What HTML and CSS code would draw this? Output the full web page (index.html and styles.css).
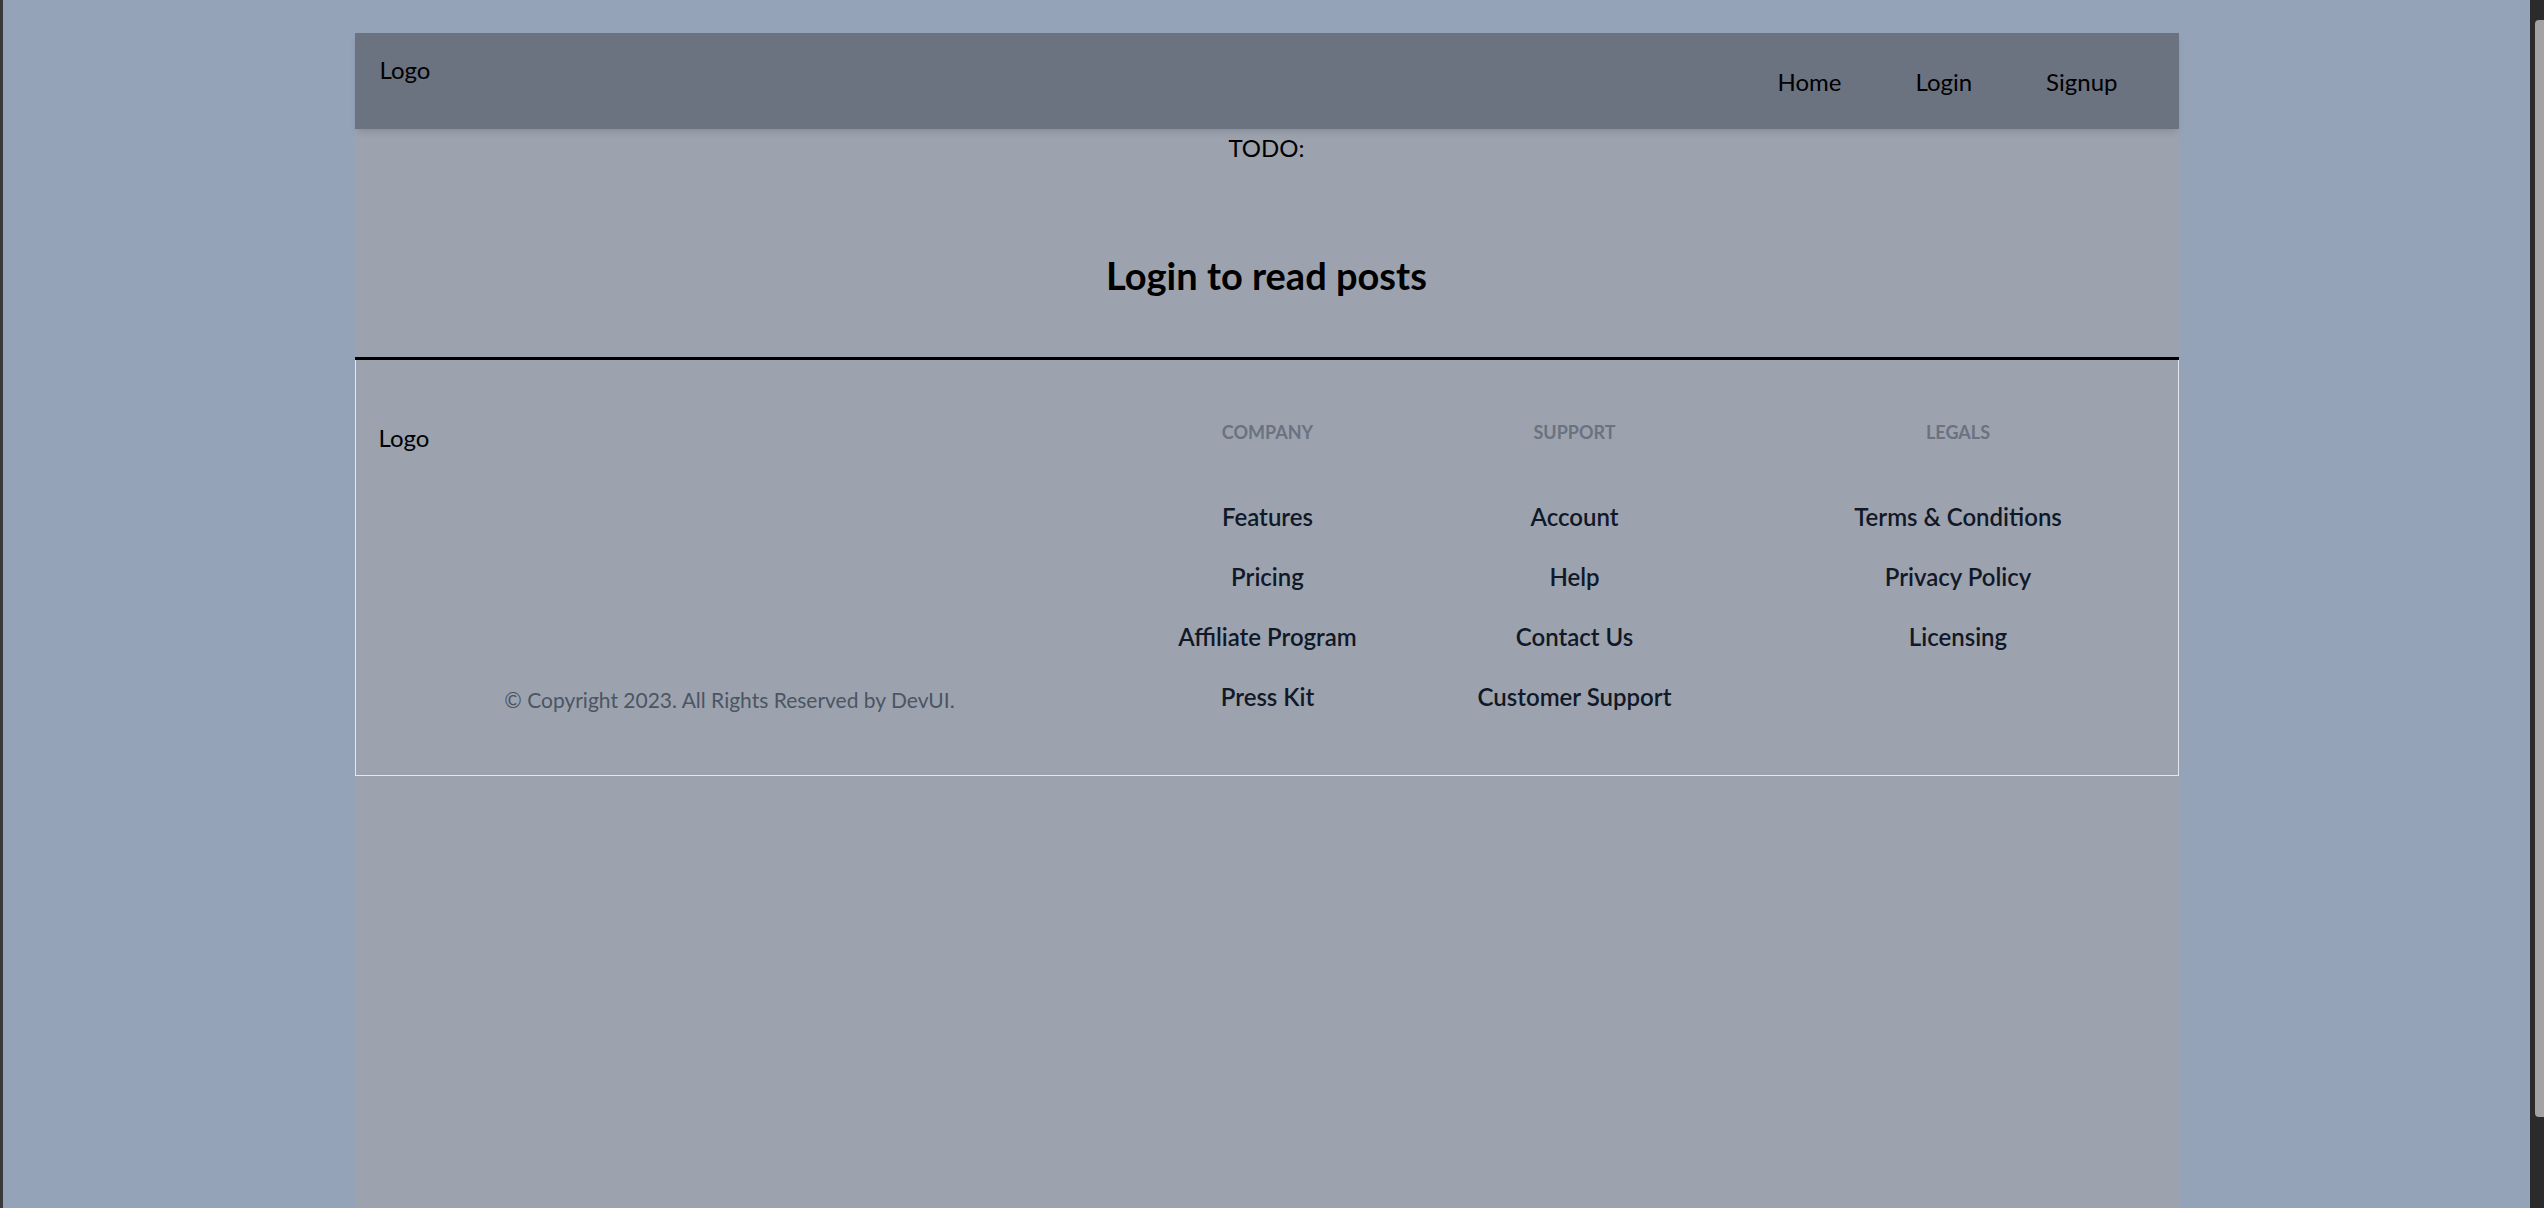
FILE: index.html
```html
<!DOCTYPE html>
<html lang="en">
<head>
<meta charset="utf-8">
<title>Posts</title>
<link rel="stylesheet" href="styles.css">
</head>
<body>
<div class="frame-edge"></div>
<div class="viewport">
  <div class="page">
    <header class="topbar">
      <div class="brand">Logo</div>
      <nav class="nav">
        <a class="nav-link" href="#">Home</a>
        <a class="nav-link" href="#">Login</a>
        <a class="nav-link" href="#">Signup</a>
      </nav>
    </header>
    <main class="content">
      <div class="todo">TODO:</div>
      <h2 class="notice">Login to read posts</h2>
    </main>
    <footer class="footer">
      <div class="footer-brand">
        <div class="footer-logo">Logo</div>
        <p class="copyright">© Copyright 2023. All Rights Reserved by DevUI.</p>
      </div>
      <div class="footer-col">
        <h3 class="col-title">Company</h3>
        <a class="col-link" href="#">Features</a>
        <a class="col-link" href="#">Pricing</a>
        <a class="col-link" href="#">Affiliate Program</a>
        <a class="col-link" href="#">Press Kit</a>
      </div>
      <div class="footer-col">
        <h3 class="col-title">Support</h3>
        <a class="col-link" href="#">Account</a>
        <a class="col-link" href="#">Help</a>
        <a class="col-link" href="#">Contact Us</a>
        <a class="col-link" href="#">Customer Support</a>
      </div>
      <div class="footer-col legals">
        <h3 class="col-title">Legals</h3>
        <a class="col-link" href="#">Terms &amp; Conditions</a>
        <a class="col-link" href="#">Privacy Policy</a>
        <a class="col-link" href="#">Licensing</a>
      </div>
    </footer>
  </div>
</div>
<div class="scrollbar"><div class="thumb"></div></div>
</body>
</html>
```
FILE: styles.css
```css
* { box-sizing: border-box; }

html, body {
  margin: 0;
  height: 1208px;
  overflow: hidden;
}

body {
  display: flex;
  background: #94a3b8;
  font-family: Lato, "Open Sans", "Noto Sans", sans-serif;
  color: #000;
}

.frame-edge {
  width: 3px;
  flex: 0 0 3px;
  background: #3a3a3a;
}

.viewport {
  flex: 1;
  padding-top: 33px;
}

.scrollbar {
  width: 14px;
  flex: 0 0 14px;
  background: #2b2b2b;
  padding: 20px 0 0 5px;
}

.thumb {
  height: 1097px;
  background: #a3a3a3;
  border-radius: 4px 0 0 4px;
}

.page {
  width: 1824px;
  margin: 0 auto;
  min-height: 1200px;
  background: #9ca3af;
}

/* header */
.topbar {
  position: relative;
  z-index: 1;
  height: 96px;
  display: flex;
  justify-content: space-between;
  align-items: flex-start;
  background: #6b7280;
  box-shadow: 0 5px 8px -2px rgba(0,0,0,0.1), 0 2px 5px -3px rgba(0,0,0,0.1);
}

.brand {
  padding: 19px 0 0 25px;
  font-size: 24px;
  line-height: 36px;
}

.nav {
  display: flex;
  padding: 31px 24px 0 0;
}

.nav-link {
  padding: 0 37px;
  font-size: 24px;
  line-height: 36px;
  color: #000;
  text-decoration: none;
}

/* main */
.content {
  text-align: center;
  padding-bottom: 57px;
  border-bottom: 3px solid #000;
}

.todo {
  padding-top: 1px;
  font-size: 24px;
  line-height: 36px;
}

.notice {
  margin: 85px 0 0;
  font-size: 38px;
  line-height: 49px;
  font-weight: 700;
}

/* footer */
.footer {
  display: grid;
  grid-template-columns: 702px 374px 240px 1fr;
  padding: 60px 0 60px 23px;
  border: 1px solid #e5e7eb;
  border-top: none;
}

.footer-brand {
  display: flex;
  flex-direction: column;
  justify-content: space-between;
}

.footer-logo {
  font-size: 24px;
  line-height: 36px;
}

.copyright {
  margin: 0;
  text-align: center;
  font-size: 21px;
  line-height: 30px;
  color: #4b5563;
}

.footer-col {
  display: flex;
  flex-direction: column;
  align-items: center;
}

.legals {
  margin-left: 44px;
}

.col-title {
  margin: 0 0 55px;
  font-size: 18px;
  line-height: 24px;
  font-weight: 700;
  text-transform: uppercase;
  color: #6b7280;
}

.col-link {
  font-size: 24px;
  line-height: 36px;
  font-weight: 600;
  color: #111827;
  text-decoration: none;
  margin-bottom: 24px;
}

.col-link:last-child {
  margin-bottom: 0;
}
```
